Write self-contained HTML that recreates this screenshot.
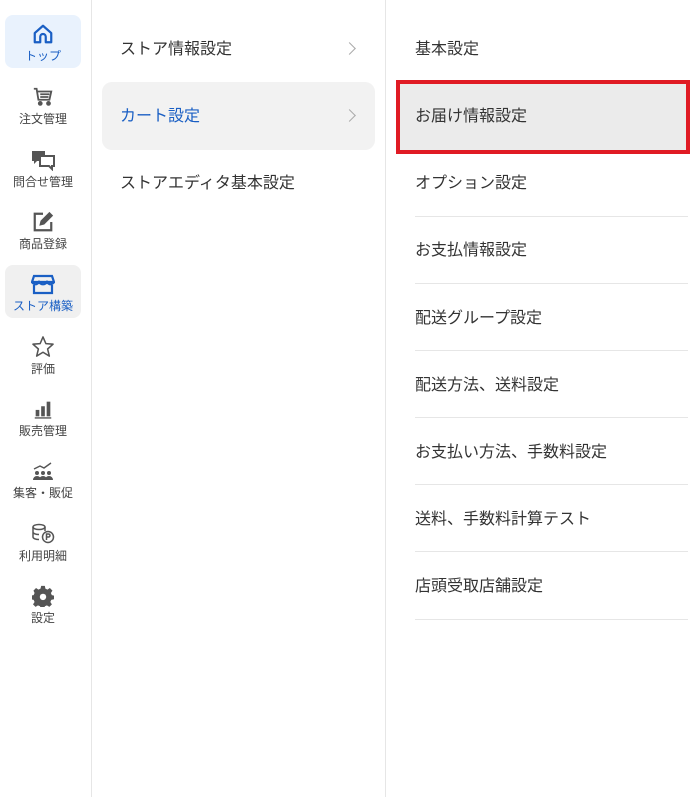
<!DOCTYPE html>
<html><head><meta charset="utf-8"><style>
*{margin:0;padding:0;box-sizing:border-box}
body{width:697px;height:797px;background:#fff;position:relative;overflow:hidden;font-family:"Liberation Sans","Noto Sans CJK JP",sans-serif;color:#333}
.a{position:absolute}
.vl{position:absolute;top:0;width:1px;height:797px;background:#e6e6e6}
.si{position:absolute;left:0;width:86px;text-align:center;font-size:12px;color:#444}
.si svg{display:block;margin:0 auto 2px}
.m{position:absolute;left:120px;font-size:16px;color:#333;line-height:20px}
.r{position:absolute;left:415px;font-size:16px;color:#333;line-height:20px}
.hr{position:absolute;left:415px;width:273px;height:1px;background:#e6e6e6}
.ch{position:absolute;left:345px;width:9px;height:9px;border-top:1.3px solid #aaa;border-right:1.3px solid #aaa;transform:rotate(45deg)}
</style></head><body>
<div class="vl" style="left:91px"></div>
<div class="vl" style="left:385px"></div>
<div class="a" style="left:5px;top:15px;width:76px;height:53px;background:#e9f2fd;border-radius:8px"></div>
<div class="a" style="left:5px;top:265px;width:76px;height:53px;background:#f0f0f0;border-radius:8px"></div>

<div class="si" style="top:23px;color:#1a5fc4;left:0"><svg width="22" height="22" viewBox="0 0 24 24" fill="none" stroke="#1a5fc4" stroke-width="2.4"><path d="M3 11L12 3l9 8v10h-6v-6a3 3 0 0 0-6 0v6H3z" stroke-linejoin="round"/></svg>トップ</div>
<div class="si" style="top:86px"><svg width="22" height="22" viewBox="0 0 24 24" fill="none" stroke="#555" stroke-width="2"><path d="M2 3h3l2 12h12l2-9H6"/><path d="M9 9h10M9 12h9"/><circle cx="9" cy="19" r="1.6" fill="#555"/><circle cx="18" cy="19" r="1.6" fill="#555"/></svg>注文管理</div>
<div class="si" style="top:149px"><svg width="24" height="22" viewBox="0 0 24 22"><path d="M1 2h13v10H6l-3 3v-3H1z" fill="#555"/><path d="M9 7h14v10h-2v3l-3-3H9z" fill="#fff" stroke="#555" stroke-width="2"/></svg>問合せ管理</div>
<div class="si" style="top:211px"><svg width="22" height="22" viewBox="0 0 24 24" fill="none" stroke="#555" stroke-width="2.4"><path d="M12 3H3v18h18v-9"/><path d="M9 15l1-4 9-9 3 3-9 9z" fill="#555" stroke-width="1.5"/></svg>商品登録</div>
<div class="si" style="top:273px;color:#1a5fc4"><svg width="24" height="22" viewBox="0 0 24 22" fill="none" stroke="#1a5fc4" stroke-width="2.2"><path d="M3 3h18l2 6H1z"/><path d="M1 9c2 3 5 3 7 0 2 3 6 3 8 0 2 3 5 3 7 0"/><path d="M3 12v8h18v-8"/></svg>ストア構築</div>
<div class="si" style="top:335px"><svg width="24" height="23" viewBox="0 0 24 24" fill="none" stroke="#555" stroke-width="1.6"><path d="M12 2l3 7 7.5.6-5.7 5 1.8 7.4L12 18l-6.6 4 1.8-7.4-5.7-5L9 9z" stroke-linejoin="round"/></svg>評価</div>
<div class="si" style="top:398px"><svg width="22" height="22" viewBox="0 0 24 24" fill="#555"><rect x="4" y="13" width="4" height="7"/><rect x="10" y="9" width="4" height="11"/><rect x="16" y="4" width="4" height="16"/><rect x="3" y="21" width="18" height="1.5"/></svg>販売管理</div>
<div class="si" style="top:460px"><svg width="24" height="22" viewBox="0 0 24 22" fill="#555"><path d="M3 9l6-3 4 2 7-5" fill="none" stroke="#555" stroke-width="1.4"/><circle cx="6" cy="13" r="2"/><circle cx="12" cy="13" r="2"/><circle cx="18" cy="13" r="2"/><path d="M2 20a4 4 0 0 1 8 0zM8 20a4 4 0 0 1 8 0zM14 20a4 4 0 0 1 8 0z"/></svg>集客・販促</div>
<div class="si" style="top:523px"><svg width="26" height="22" viewBox="0 0 26 22" fill="none" stroke="#555" stroke-width="1.5"><ellipse cx="9" cy="4" rx="6" ry="2.5"/><path d="M3 4v10c0 1.4 2.7 2.5 6 2.5M3 9c0 1.4 2.7 2.5 6 2.5M15 4v4"/><circle cx="18" cy="14" r="5.5" fill="#fff"/><path d="M16.5 17v-6h2a1.5 1.5 0 0 1 0 3h-2"/></svg>利用明細</div>
<div class="si" style="top:585px"><svg width="22" height="22" viewBox="0 0 24 24"><path fill="#555" d="M10 1h4l.6 3 2.3 1 2.6-1.7 2.8 2.8L20.6 8.7l1 2.3 2.4.6v4l-3 .6-1 2.3 1.7 2.6-2.8 2.8-2.6-1.7-2.3 1-.6 3h-4l-.6-3-2.3-1-2.6 1.7-2.8-2.8 1.7-2.6-1-2.3-3-.6v-4l3-.6 1-2.3L1.6 6.1 4.4 3.3 7 5l2.3-1z"/><circle cx="12" cy="13" r="3.5" fill="#fff"/></svg>設定</div>

<div class="a" style="left:102px;top:82px;width:273px;height:68px;background:#f2f2f2;border-radius:10px"></div>
<div class="m" style="top:40px">ストア情報設定</div>
<div class="ch" style="top:44px"></div>
<div class="m" style="top:107px;color:#1a5fc4">カート設定</div>
<div class="ch" style="top:111px"></div>
<div class="m" style="top:174px">ストアエディタ基本設定</div>

<div class="a" style="left:396px;top:80px;width:294px;height:74px;background:#ebebeb;border:4px solid #e01b24"></div>
<div class="r" style="top:40px">基本設定</div>
<div class="r" style="top:107px">お届け情報設定</div>
<div class="r" style="top:174px">オプション設定</div>
<div class="hr" style="top:216px"></div>
<div class="r" style="top:241px">お支払情報設定</div>
<div class="hr" style="top:283px"></div>
<div class="r" style="top:309px">配送グループ設定</div>
<div class="hr" style="top:350px"></div>
<div class="r" style="top:376px">配送方法、送料設定</div>
<div class="hr" style="top:417px"></div>
<div class="r" style="top:443px">お支払い方法、手数料設定</div>
<div class="hr" style="top:484px"></div>
<div class="r" style="top:510px">送料、手数料計算テスト</div>
<div class="hr" style="top:551px"></div>
<div class="r" style="top:577px">店頭受取店舗設定</div>
<div class="hr" style="top:619px"></div>
</body></html>
